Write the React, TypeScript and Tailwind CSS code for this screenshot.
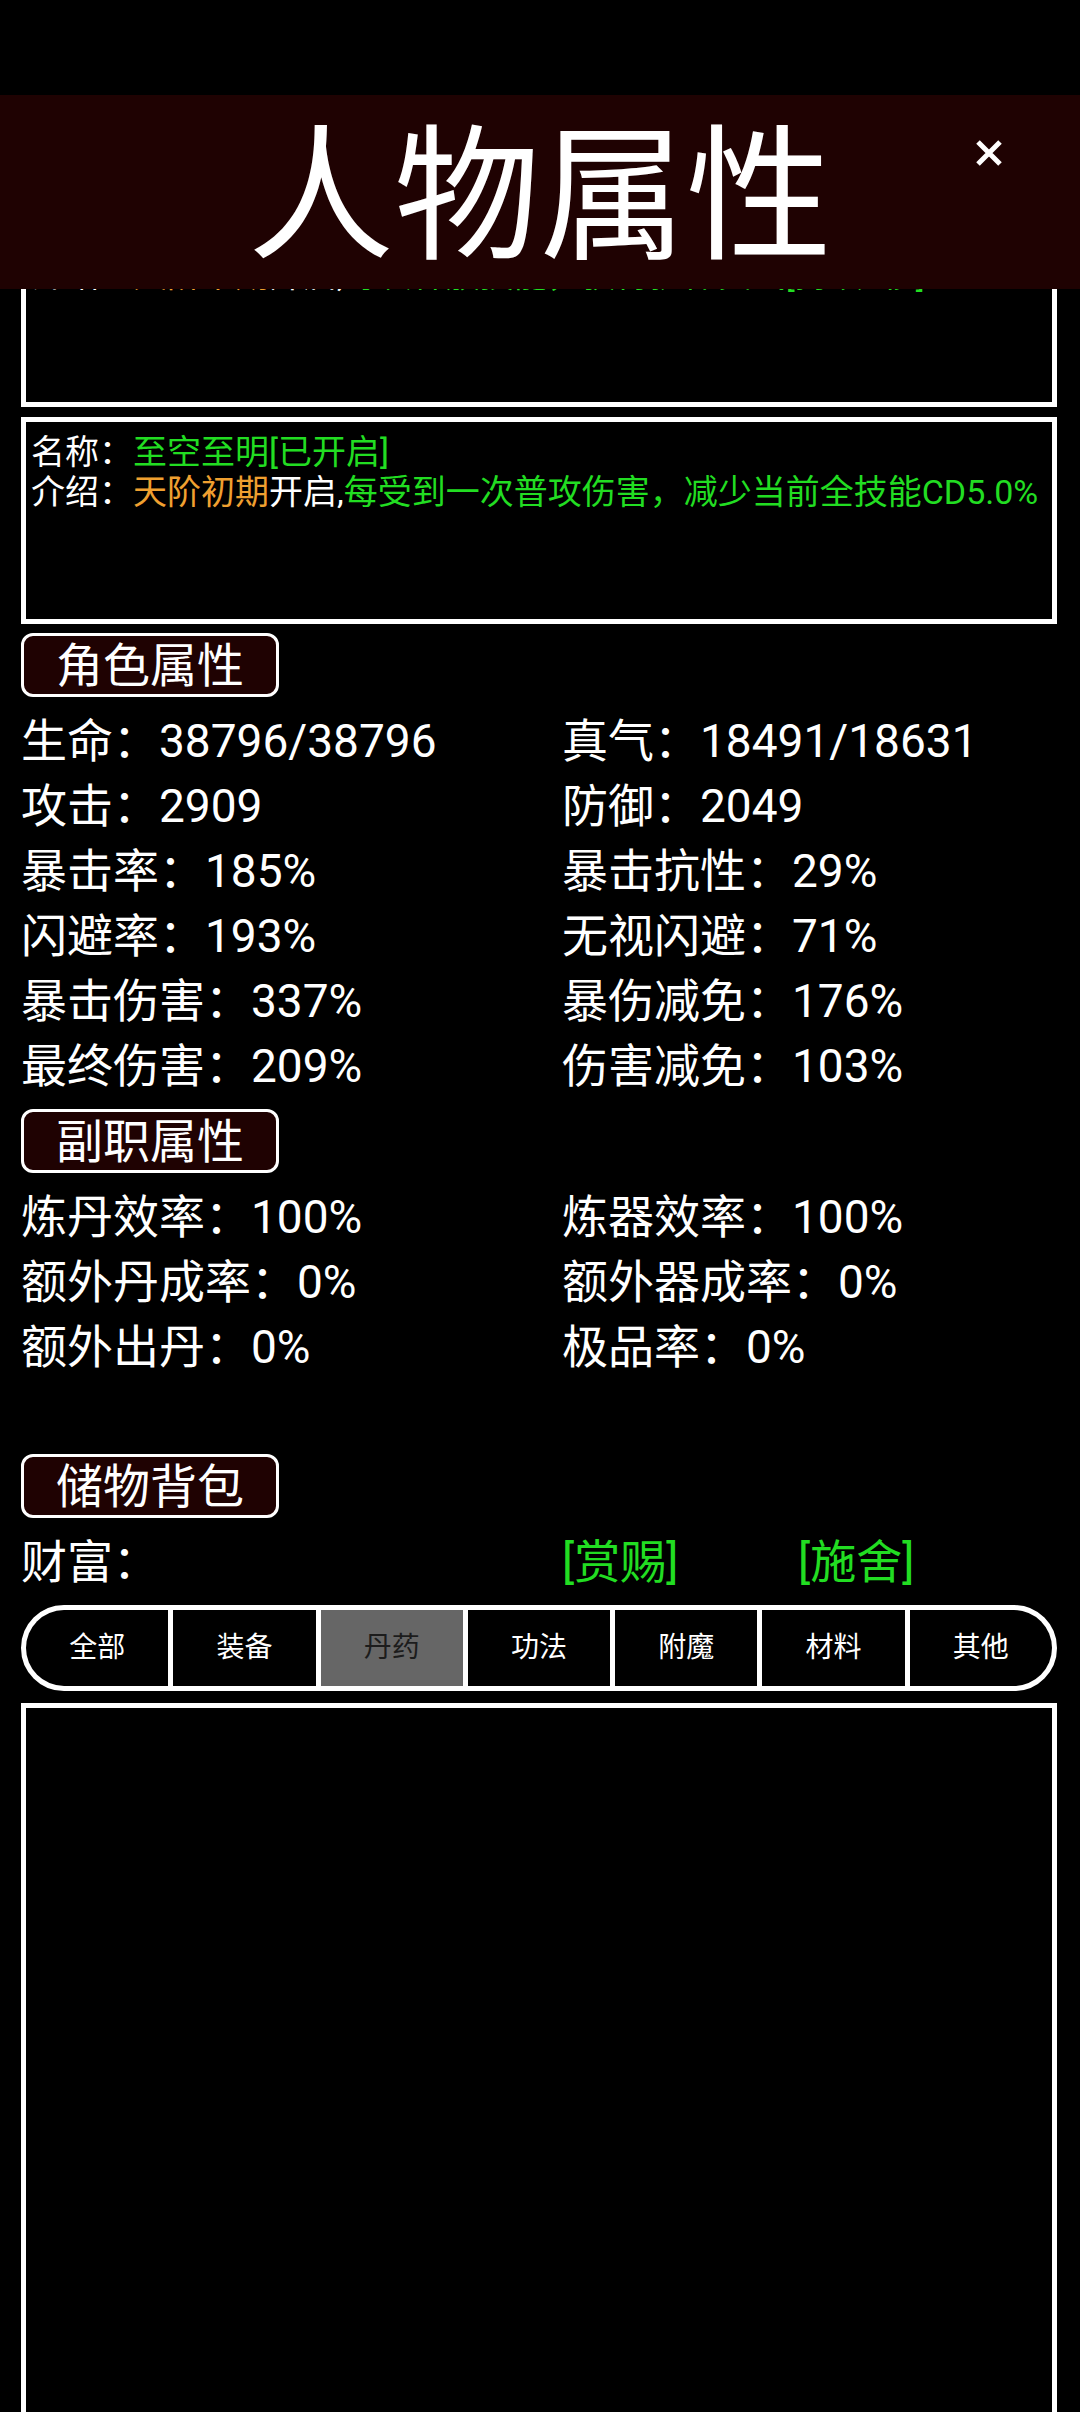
import React from 'react';

const green = 'text-[#22dd22]';
const orange = 'text-[#f0a030]';

const mainStats: [string, string][] = [
  ['生命：38796/38796', '真气：18491/18631'],
  ['攻击：2909', '防御：2049'],
  ['暴击率：185%', '暴击抗性：29%'],
  ['闪避率：193%', '无视闪避：71%'],
  ['暴击伤害：337%', '暴伤减免：176%'],
  ['最终伤害：209%', '伤害减免：103%'],
];

const jobStats: [string, string][] = [
  ['炼丹效率：100%', '炼器效率：100%'],
  ['额外丹成率：0%', '额外器成率：0%'],
  ['额外出丹：0%', '极品率：0%'],
];

const tabs = ['全部', '装备', '丹药', '功法', '附魔', '材料', '其他'];

function Badge({ label }: { label: string }) {
  return (
    <div className="flex h-[64px] w-[258px] items-center justify-center rounded-[12px] border-[3px] border-white bg-[#1f0202] text-[47px] leading-none text-white">
      {label}
    </div>
  );
}

function StatGrid({ rows }: { rows: [string, string][] }) {
  return (
    <div className="grid grid-cols-[541px_1fr] text-[46px] leading-[65px] text-white">
      {rows.map(([a, b]) => (
        <React.Fragment key={a}>
          <div className="whitespace-nowrap">{a}</div>
          <div className="whitespace-nowrap">{b}</div>
        </React.Fragment>
      ))}
    </div>
  );
}

export default function App() {
  return (
    <div className="h-[2412px] w-[1080px] overflow-hidden bg-black font-['Roboto','Noto_Sans_CJK_SC',sans-serif]">
      <div className="h-[95px] bg-black" />

      <header className="grid h-[194px] grid-cols-[1fr_auto_1fr] bg-[#1f0202]">
        <div />
        <h1 className="flex items-center pt-[12px] text-[146px] leading-none text-white">人物属性</h1>
        <div className="flex items-start justify-end pr-[77px] pt-[44px]">
          <svg width="28" height="28" viewBox="0 0 28 28">
            <path d="M3 3 L25 25 M25 3 L3 25" stroke="#fff" strokeWidth="5" />
          </svg>
        </div>
      </header>

      <div className="pl-[21px] pr-[23px]">
        {/* skill box scrolled under the title */}
        <div className="h-[118px] overflow-hidden border-x-[5px] border-b-[5px] border-white px-[5px]">
          <div className="-mt-[34px] whitespace-nowrap text-[34px] leading-[40px] text-white">
            介绍：<span className={orange}>天阶中期</span>开启,
            <span className={green}>每次释放技能，获得护体真气[持续3秒]</span>
          </div>
        </div>

        <div className="mt-[10px] h-[207px] border-[5px] border-white px-[5px] pt-[10px] text-[34px] leading-[40px] text-white">
          <div className="whitespace-nowrap">
            名称：<span className={green}>至空至明[已开启]</span>
          </div>
          <div className="whitespace-nowrap">
            介绍：<span className={orange}>天阶初期</span>开启,
            <span className={green}>每受到一次普攻伤害，减少当前全技能CD5.0%</span>
          </div>
        </div>

        <div className="mt-[9px]">
          <Badge label="角色属性" />
        </div>
        <div className="mt-[12px]">
          <StatGrid rows={mainStats} />
        </div>

        <div className="mt-[10px]">
          <Badge label="副职属性" />
        </div>
        <div className="mt-[12px]">
          <StatGrid rows={jobStats} />
        </div>

        <div className="mt-[74px]">
          <Badge label="储物背包" />
        </div>

        <div className="mt-[12px] grid grid-cols-[541px_236px_1fr] text-[46px] leading-[65px] text-white">
          <div>财富：</div>
          <div className={green}>[赏赐]</div>
          <div className={green}>[施舍]</div>
        </div>

        <div className="mt-[10px] flex h-[86px] overflow-hidden rounded-full border-[5px] border-white bg-white">
          {tabs.map((t, i) => (
            <div
              key={t}
              className={
                'flex flex-1 items-center justify-center text-[28px] ' +
                (i > 0 ? 'ml-[5px] ' : '') +
                (t === '丹药' ? 'bg-[#666666] text-[#1c1c1c]' : 'bg-black text-white')
              }
            >
              {t}
            </div>
          ))}
        </div>

        <div className="mt-[12px] h-[709px] border-x-[5px] border-t-[5px] border-white" />
      </div>
    </div>
  );
}
